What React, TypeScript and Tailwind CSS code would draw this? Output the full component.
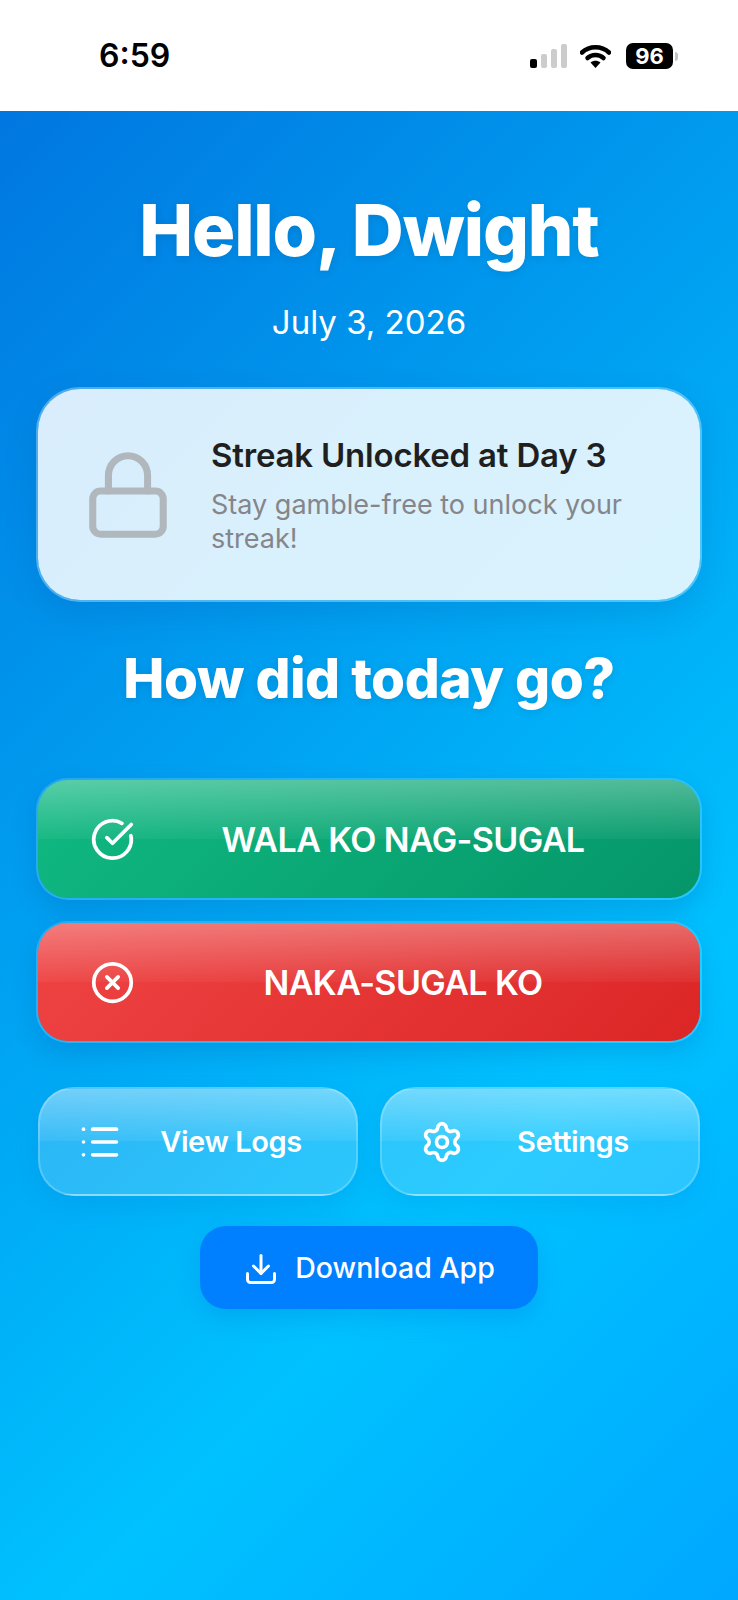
import { CircleCheckBig, CircleX, Download, List, Lock, Settings } from "lucide-react";

function StatusBar() {
  return (
    <div className="flex h-[111px] items-start justify-between bg-white pl-[99px] pr-[60px] pt-[37px] font-['Inter',sans-serif]">
      <span className="text-[32px] font-semibold leading-[38px] text-black">6:59</span>
      <div className="mt-[6px] flex items-center">
        <svg width="38" height="24" viewBox="0 0 38 24" aria-hidden="true">
          <rect x="0" y="15" width="7" height="9" rx="2" fill="#000" />
          <rect x="11" y="10" width="6" height="14" rx="2" fill="#ccc" />
          <rect x="21" y="5" width="6" height="19" rx="2" fill="#ccc" />
          <rect x="31" y="0" width="6" height="24" rx="2" fill="#ccc" />
        </svg>
        <svg className="ml-[12px]" width="31" height="24" viewBox="0 0 31 24" aria-hidden="true">
          <path d="M2 8.5C9.5 1.5 21.5 1.5 29 8.5" fill="none" stroke="#000" strokeWidth="4.5" strokeLinecap="round" />
          <path d="M7.5 14C12 10 19 10 23.5 14" fill="none" stroke="#000" strokeWidth="4.5" strokeLinecap="round" />
          <path d="M15.5 24L10.5 18.5C13.5 16 17.5 16 20.5 18.5Z" fill="#000" />
        </svg>
        <span className="ml-[15px] flex h-[26px] w-[47px] items-center justify-center rounded-[7px] bg-black text-[22px] font-bold leading-none text-white">
          96
        </span>
        <span className="ml-[2px] h-[9px] w-[3px] rounded-r-full bg-[#c4c4c4]" />
      </div>
    </div>
  );
}

function ActionButton({ tone, icon, label }: { tone: "green" | "red"; icon: React.ReactNode; label: string }) {
  const toneClass =
    tone === "green"
      ? "bg-[linear-gradient(180deg,rgba(255,255,255,0.3),rgba(255,255,255,0.04)_50%,rgba(255,255,255,0)_50%),linear-gradient(135deg,#10b981,#059669)]"
      : "bg-[linear-gradient(180deg,rgba(255,255,255,0.3),rgba(255,255,255,0.04)_50%,rgba(255,255,255,0)_50%),linear-gradient(135deg,#ef4444,#dc2626)]";
  return (
    <button
      type="button"
      className={`flex h-[122px] w-full items-center rounded-[32px] border-2 border-white/15 bg-clip-padding pl-[52px] pr-[29px] shadow-[0_10px_24px_rgba(0,60,140,0.18)] ${toneClass}`}
    >
      {icon}
      <span className="flex-1 text-center text-[34px] font-semibold tracking-[-0.6px] text-white">{label}</span>
    </button>
  );
}

function GlassButton({ icon, label }: { icon: React.ReactNode; label: string }) {
  return (
    <button
      type="button"
      className="flex h-[109px] flex-1 items-center rounded-[36px] border-2 border-white/20 bg-[linear-gradient(180deg,rgba(255,255,255,0.45),rgba(255,255,255,0.22)_50%,rgba(255,255,255,0.17)_50%,rgba(255,255,255,0.17))] pl-[38px] pr-[16px] shadow-[0_10px_24px_rgba(0,90,180,0.12)]"
    >
      {icon}
      <span className="flex-1 text-center text-[29px] font-semibold tracking-[-0.4px] text-white">{label}</span>
    </button>
  );
}

export default function App() {
  return (
    <div className="flex h-[1600px] w-[738px] flex-col bg-white font-['Inter',sans-serif]">
      <StatusBar />
      <main className="flex flex-1 flex-col items-center bg-[linear-gradient(135deg,#0077e0_0%,#00c2ff_70%,#00a8ff_100%)] px-[36px]">
        <h1 className="mt-[79px] text-[72px] font-extrabold leading-[80px] tracking-[-1.15px] text-white [text-shadow:0_2px_8px_rgba(0,0,0,0.1)]">
          Hello, Dwight
        </h1>
        <p className="mt-[30px] text-[33px] leading-[44px] text-white">July 3, 2026</p>

        <section className="mt-[43px] flex h-[215px] w-full items-center gap-[36px] rounded-[44px] border-2 border-white/30 bg-white/85 bg-clip-padding pl-[43px] pr-[30px] shadow-[0_12px_32px_rgba(0,60,140,0.16)]">
          <Lock size={94} strokeWidth={1.8} className="shrink-0 text-[#b0b8bd]" />
          <div className="pt-[2px]">
            <h2 className="text-[33px] font-semibold leading-[40px] tracking-[-0.2px] text-[#1f1f1f]">
              Streak Unlocked at Day 3
            </h2>
            <p className="mt-[13px] text-[27px] leading-[34px] text-[#85858a]">
              Stay gamble-free to unlock your streak!
            </p>
          </div>
        </section>

        <h2 className="mt-[41px] text-[55px] font-extrabold leading-[70px] tracking-[-0.5px] text-white [text-shadow:0_2px_8px_rgba(0,0,0,0.1)]">
          How did today go?
        </h2>

        <div className="mt-[65px] w-full">
          <ActionButton
            tone="green"
            icon={<CircleCheckBig size={45} strokeWidth={2} className="shrink-0 text-white" />}
            label="WALA KO NAG-SUGAL"
          />
        </div>
        <div className="mt-[21px] w-full">
          <ActionButton
            tone="red"
            icon={<CircleX size={45} strokeWidth={2} className="shrink-0 text-white" />}
            label="NAKA-SUGAL KO"
          />
        </div>

        <div className="mt-[44px] flex w-full gap-[22px] px-[2px]">
          <GlassButton icon={<List size={44} strokeWidth={2} className="shrink-0 text-white" />} label="View Logs" />
          <GlassButton icon={<Settings size={44} strokeWidth={2} className="shrink-0 text-white" />} label="Settings" />
        </div>

        <button
          type="button"
          className="mt-[30px] flex h-[83px] w-[338px] items-center justify-center gap-[16px] rounded-[26px] bg-[#0080ff] pt-[2px] text-[28.5px] font-medium text-white shadow-[0_10px_24px_rgba(0,90,200,0.2)]"
        >
          <Download size={36} strokeWidth={2} className="shrink-0" />
          Download App
        </button>
      </main>
    </div>
  );
}
